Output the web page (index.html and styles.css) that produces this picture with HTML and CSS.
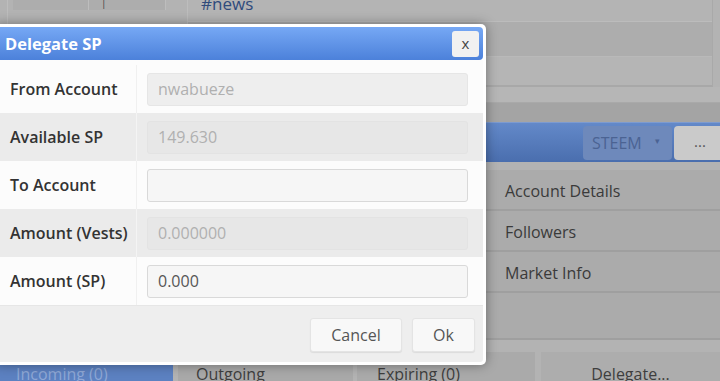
FILE: index.html
```html
<!DOCTYPE html>
<html>
<head>
<meta charset="utf-8">
<link rel="stylesheet" href="styles.css">
</head>
<body>
<div class="page">
  <div class="top">
    <div class="left-panel">
      <div class="cells"><span class="cell c1"></span><span class="cell c2">|</span></div>
      <div class="left-text">77.6 M 1,000</div>
    </div>
    <div class="right-panel">
      <div class="rp-row rp-first"><span class="tag">#news</span></div>
      <div class="rp-row rp-stripe"></div>
      <div class="rp-row rp-last"></div>
    </div>
  </div>
  <div class="band-light"></div>
  <div class="band-dark"></div>
  <div class="toolbar">
    <div class="dropdown">STEEM <span class="caret">▾</span></div>
    <div class="more">...</div>
  </div>
  <div class="main">
    <div class="main-left"></div>
    <div class="menu">
      <div class="menu-row">Account Details</div>
      <div class="menu-row">Followers</div>
      <div class="menu-row">Market Info</div>
      <div class="menu-row menu-empty"></div>
    </div>
  </div>
  <div class="tabs">
    <div class="tab tab-active">Incoming (0)</div>
    <div class="tab tab-out">Outgoing</div>
    <div class="tab tab-exp">Expiring (0)</div>
    <div class="tab tab-del">Delegate...</div>
  </div>
</div>

<div class="dialog">
  <div class="dlg-header">
    <span class="dlg-title">Delegate SP</span>
    <button class="dlg-close">x</button>
  </div>
  <div class="dlg-body">
    <div class="row row-white">
      <div class="lbl">From Account</div>
      <div class="val"><div class="inp inp-dis">nwabueze</div></div>
    </div>
    <div class="row row-gray">
      <div class="lbl">Available SP</div>
      <div class="val"><div class="inp inp-dis">149.630</div></div>
    </div>
    <div class="row row-white">
      <div class="lbl">To Account</div>
      <div class="val"><div class="inp inp-en"></div></div>
    </div>
    <div class="row row-gray">
      <div class="lbl">Amount (Vests)</div>
      <div class="val"><div class="inp inp-dis">0.000000</div></div>
    </div>
    <div class="row row-white">
      <div class="lbl">Amount (SP)</div>
      <div class="val"><div class="inp inp-en">0.000</div></div>
    </div>
  </div>
  <div class="dlg-footer">
    <button class="btn btn-cancel">Cancel</button>
    <button class="btn btn-ok">Ok</button>
  </div>
</div>
</body>
</html>
```

FILE: styles.css
```css
* { box-sizing: border-box; }
html, body {
  margin: 0;
  padding: 0;
}
body {
  width: 720px;
  height: 381px;
  overflow: hidden;
  background: #b3b3b3;
  font-family: "Open Sans", "Noto Sans", sans-serif;
  position: relative;
}
.page {
  display: flex;
  flex-direction: column;
  width: 720px;
}
.top {
  height: 87px;
  display: flex;
}
.left-panel {
  margin-left: 7px;
  width: 163px;
  border-left: 1px solid #bdbdbd;
  padding-left: 5px;
}
.cells {
  display: flex;
  height: 10px;
}
.cell {
  display: block;
  height: 10px;
  background: #adadad;
  border-right: 1px solid #bdbdbd;
  font-size: 10px;
  line-height: 4px;
  color: #444;
  overflow: hidden;
}
.c1 { width: 76px; }
.c2 { width: 77px; padding-left: 12px; }
.left-text {
  margin-top: 12px;
  margin-left: 30px;
  font-size: 15px;
  line-height: 15px;
  color: #3a3a3a;
}
.right-panel {
  margin-left: 17px;
  width: 526px;
  border-left: 1px solid #bdbdbd;
  border-right: 1px solid #a9a9a9;
  border-bottom: 2px solid #a8a8a8;
  display: flex;
  flex-direction: column;
}
.rp-row { width: 100%; }
.rp-first {
  height: 22px;
  background: #b4b4b4;
  border-bottom: 1px solid #bcbcbc;
}
.tag {
  display: block;
  margin-left: 13px;
  margin-top: -6px;
  font-size: 17px;
  line-height: 20px;
  color: #2f4b7c;
}
.rp-stripe {
  height: 34px;
  background: #adadad;
}
.rp-last {
  flex: 1;
  background: #b5b5b5;
  border-top: 1px solid #b9b9b9;
}
.band-light {
  height: 16px;
  background: #b6b6b6;
  border-bottom: 1px solid #a9a9a9;
}
.band-dark {
  height: 19px;
  background: #a4a4a4;
}
.toolbar {
  height: 40px;
  background: linear-gradient(#6389c9, #4a6eae);
  border-top: 1px solid #7d9bd0;
  display: flex;
  justify-content: flex-end;
  align-items: flex-start;
  padding-top: 3px;
  gap: 2px;
}
.dropdown {
  width: 89px;
  height: 34px;
  background: #6e89bb;
  border-radius: 4px;
  color: #4b6393;
  font-size: 16px;
  line-height: 34px;
  padding-left: 9px;
  display: flex;
  justify-content: space-between;
  padding-right: 12px;
}
.caret {
  font-size: 9px;
  line-height: 30px;
}
.more {
  width: 46px;
  height: 34px;
  background: #cacaca;
  border-radius: 4px 0 0 4px;
  color: #555;
  font-size: 15px;
  line-height: 30px;
  padding-left: 20px;
}
.main {
  display: flex;
  height: 178px;
}
.main-left {
  width: 486px;
}
.menu {
  flex: 1;
  padding-top: 8px;
  display: flex;
  flex-direction: column;
}
.menu-row {
  height: 41px;
  border-bottom: 2px solid #9f9f9f;
  background: #ababab;
  padding-left: 19px;
  font-size: 16px;
  line-height: 42px;
  color: #3a3a3a;
}
.menu-empty {
  height: 47px;
}
.tabs {
  margin-top: 12px;
  display: flex;
  height: 40px;
}
.tab {
  height: 40px;
  font-size: 16px;
  color: #3e3e3e;
  padding-top: 11px;
  line-height: 22px;
}
.tab-active {
  width: 173px;
  background: #5c81c1;
  color: #8fa8d6;
  padding-left: 16px;
}
.tab-out {
  width: 175px;
  margin-left: 5px;
  background: #a9a9a9;
  padding-left: 18px;
}
.tab-exp {
  width: 178px;
  margin-left: 4px;
  background: #aaaaaa;
  padding-left: 20px;
}
.tab-del {
  flex: 1;
  margin-left: 6px;
  background: #adadad;
  text-align: center;
}

/* dialog */
.dialog {
  position: absolute;
  left: -6px;
  top: 24px;
  width: 492px;
  background: #ffffff;
  padding: 3px;
  border-radius: 5px;
  box-shadow: 0 0 12px rgba(0, 0, 0, 0.38);
}
.dlg-header {
  height: 33px;
  border-radius: 4px;
  background: linear-gradient(#76a8f5, #4c81da);
  display: flex;
  align-items: center;
  justify-content: space-between;
  padding-left: 8px;
  padding-right: 4px;
}
.dlg-title {
  color: #ffffff;
  font-size: 16.5px;
  font-weight: 700;
  line-height: 20px;
}
.dlg-close {
  width: 27px;
  height: 26px;
  border: none;
  border-radius: 3px;
  background: #f1f1f1;
  color: #444;
  font-family: "Open Sans", sans-serif;
  font-size: 15px;
  line-height: 20px;
  padding: 0 0 2px 0;
}
.dlg-body {
  padding-top: 5px;
  background: #fcfcfc;
}
.row {
  display: flex;
  height: 48px;
}
.row-white { background: #fcfcfc; }
.row-gray { background: #ebebeb; }
.lbl {
  width: 140px;
  padding-left: 13px;
  font-size: 16px;
  font-weight: 600;
  color: #333;
  display: flex;
  align-items: center;
  border-right: 1px solid #f0f0f0;
}
.row-gray .lbl { border-right-color: #f4f4f4; }
.val {
  flex: 1;
  padding: 8px 15px 7px 10px;
}
.inp {
  height: 33px;
  border-radius: 3px;
  padding-left: 10px;
  font-size: 16px;
  line-height: 31px;
}
.inp-dis {
  background: #eeeeee;
  border: 1px solid #e6e6e6;
  color: #b0b0b0;
}
.row-gray .inp-dis {
  background: #e7e7e7;
  border-color: #e3e3e3;
}
.inp-en {
  background: #f6f6f6;
  border: 1px solid #d9d9d9;
  color: #555;
}
.dlg-footer {
  height: 57px;
  background: #eeeeee;
  border-top: 1px solid #e6e6e6;
  border-radius: 0 0 3px 3px;
  display: flex;
  justify-content: flex-end;
  align-items: flex-start;
  gap: 10px;
  padding: 12px 8px 0 0;
}
.btn {
  height: 34px;
  border: 1px solid #e4e4e4;
  border-radius: 3px;
  background: #f8f8f8;
  box-shadow: 0 1px 1px rgba(0, 0, 0, 0.08);
  color: #555;
  font-family: "Open Sans", sans-serif;
  font-size: 16px;
  padding: 0;
}
.btn-cancel { width: 92px; }
.btn-ok { width: 63px; }
```
